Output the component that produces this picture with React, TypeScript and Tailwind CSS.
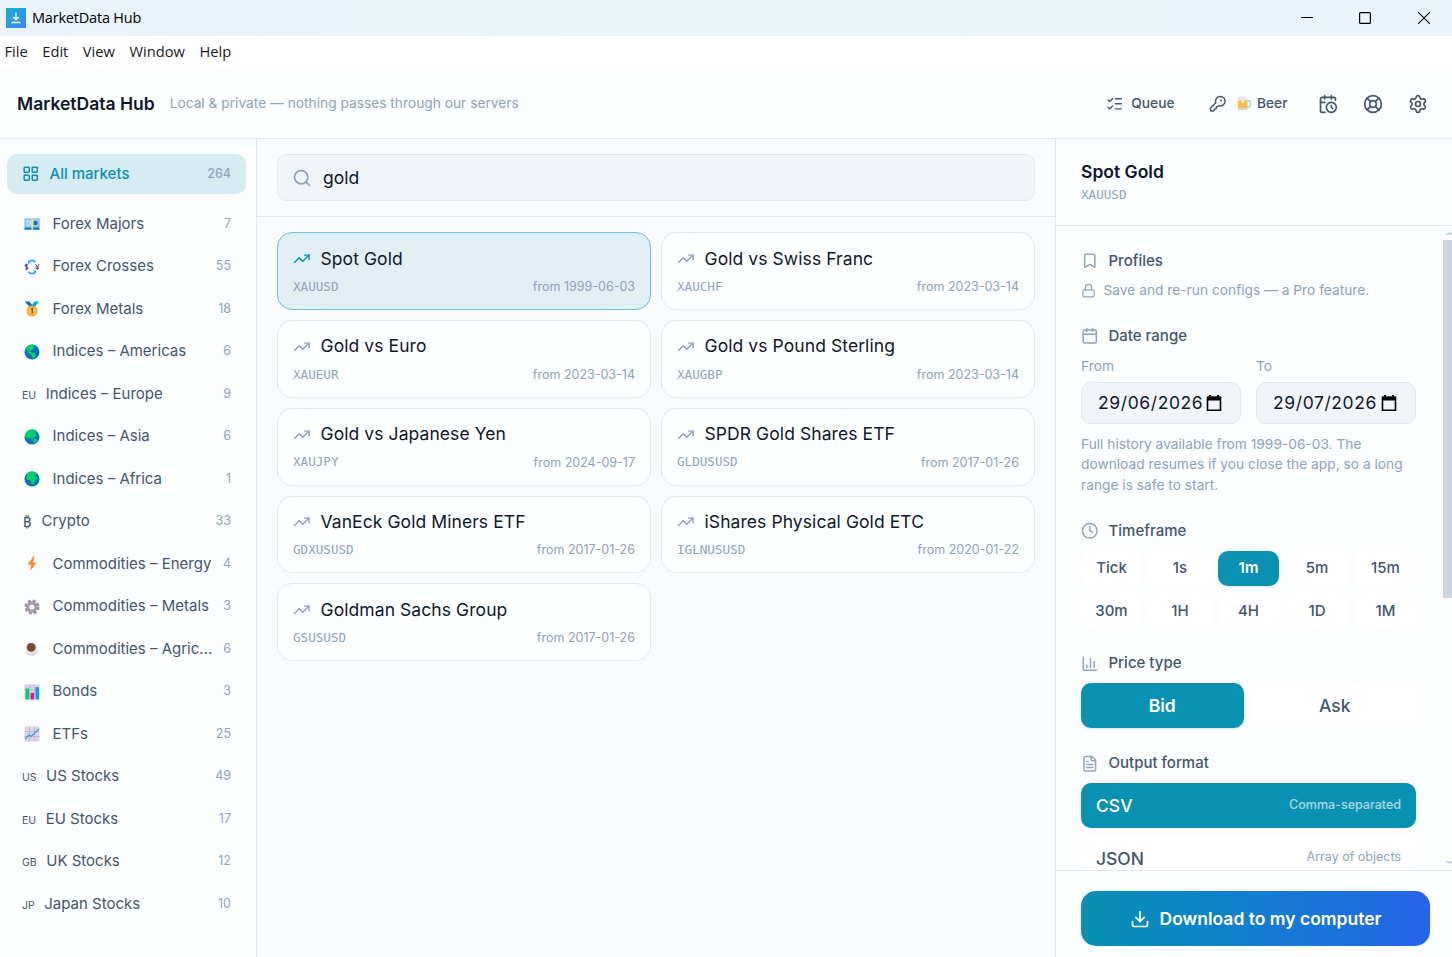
import type { ReactNode } from 'react';
import {
  Bookmark,
  Calendar,
  CalendarClock,
  ChartColumn,
  Clock,
  Download,
  FileText,
  KeyRound,
  LayoutGrid,
  LifeBuoy,
  ListChecks,
  Lock,
  Search,
  Settings,
  TrendingUp,
} from 'lucide-react';

interface Market {
  icon: ReactNode;
  name: string;
  count: number;
  emoji?: boolean;
}

interface Instrument {
  name: string;
  symbol: string;
  from: string;
}

const Emoji = ({ children }: { children: ReactNode }) => (
  <svg viewBox="0 0 16 16" className="h-4 w-4 shrink-0">
    {children}
  </svg>
);

const Banknote = () => (
  <Emoji>
    <path d="M0.5 2.5h15v9h-15z" fill="#5ab4f2" />
    <path d="M1.5 3.5h13v7h-13z" fill="#9fd3f8" />
    <path d="M0.5 11.5h15v2.2h-15z" fill="#0074c5" />
    <ellipse cx="4.8" cy="7" rx="2.2" ry="2.8" fill="#d5ecfc" />
    <path d="M6 5.4C4 4.6 3.6 9.4 6 8.7M3.3 7h2" stroke="#5ab4f2" strokeWidth=".8" fill="none" />
    <circle cx="11.5" cy="7" r="2.2" fill="#1470ad" />
    <path d="M7.4 2.5h1.8v11.2H7.4z" fill="#fce36b" />
  </Emoji>
);

const Exchange = () => (
  <Emoji>
    <path d="M4.5 3.2C6.3.7 9.8.7 11.5 3.2" stroke="#26a8ef" strokeWidth="1.7" fill="none" />
    <path d="M4.5 12.8c1.8 2.5 5.3 2.5 7 0" stroke="#26a8ef" strokeWidth="1.7" fill="none" />
    <path d="M4 1.4v3.2h3zM12 14.6v-3.2H9z" fill="#26a8ef" />
    <path d="M4.1 6.2C3.2 5.2 1 5.4 1.1 6.7c.1 1.4 3 .8 3 2.3 0 1.3-2.2 1.5-3.1.5M2.6 4.6v6.6" stroke="#6a4d96" strokeWidth="1.1" fill="none" />
    <path d="M11.5 5l1.8 3 1.8-3M13.3 8v3M11.6 8h3.4M11.6 9.6h3.4" stroke="#6a4d96" strokeWidth="1" fill="none" />
  </Emoji>
);

const Medal = () => (
  <Emoji>
    <path d="M1 .6h4.4L9 5 5.8 6.6z" fill="#0074ba" />
    <path d="M15 .6h-4.4L7.2 5l3.3 1.6z" fill="#00a6ed" />
    <circle cx="8" cy="10" r="5.5" fill="#f9a92a" />
    <circle cx="8" cy="10" r="4.2" fill="#ffb838" />
    <path d="M7 8.3l1.3-.9v5.2" stroke="#6d4534" strokeWidth="1.2" fill="none" />
  </Emoji>
);

const Globe = ({ land }: { land: string }) => (
  <Emoji>
    <circle cx="8" cy="8" r="7.5" fill="#0074ba" />
    <path d={land} fill="#00d26a" />
  </Emoji>
);

const Bolt = () => (
  <Emoji>
    <path d="M9.2.8L3.6 8.8h3.6L6.2 15l6.4-8.6H9L10.6.8z" fill="#ff822d" />
  </Emoji>
);

const Gear = () => (
  <Emoji>
    <circle cx="8" cy="8" r="6.2" stroke="#998ea4" strokeWidth="2.6" strokeDasharray="2.9 1.97" fill="none" />
    <circle cx="8" cy="8" r="4.2" stroke="#998ea4" strokeWidth="3.2" fill="none" />
    <circle cx="8" cy="8" r="4.4" stroke="#b4acbc" strokeWidth="1.1" fill="none" />
  </Emoji>
);

const Coffee = () => (
  <Emoji>
    <ellipse cx="7.7" cy="9.6" rx="5.9" ry="5.1" fill="#d3d3d3" />
    <circle cx="7.2" cy="7.5" r="6" fill="#e6e6e6" />
    <circle cx="7.2" cy="6.4" r="4.4" fill="#7d4533" />
  </Emoji>
);

const Bars = () => (
  <Emoji>
    <rect x=".5" y=".5" width="15" height="15" rx="1" fill="#d9d0e3" />
    <path d="M5.5.5v15M10.5.5v15M.5 5.5h15M.5 10.5h15" stroke="#b9aeca" strokeWidth=".7" />
    <path d="M1.5 4.5H5v11H1.5z" fill="#00d26a" />
    <path d="M6.5 9H10v6.5H6.5z" fill="#f70a8d" />
    <path d="M11.5 3H15v12.5h-3.5z" fill="#00a6ed" />
  </Emoji>
);

const LineChart = () => (
  <Emoji>
    <rect x=".5" y=".5" width="15" height="15" rx="1" fill="#dcd3e8" />
    <path d="M5.5.5v15M10.5.5v15M.5 5.5h15M.5 10.5h15" stroke="#b9aeca" strokeWidth=".8" />
    <path d="M1 13l4-4 2 1.5L15 3" stroke="#2f9be6" strokeWidth="1.1" fill="none" />
  </Emoji>
);

const Beer = () => (
  <Emoji>
    <path d="M11 5.5h1.8a1.4 1.4 0 0 1 1.4 1.4v3.6a1.4 1.4 0 0 1-1.4 1.4H11" stroke="#8fd0fb" strokeWidth="1.5" fill="none" />
    <path d="M2 4h9.5v9.2a1.5 1.5 0 0 1-1.5 1.5H3.5A1.5 1.5 0 0 1 2 13.2z" fill="#fbbf3f" />
    <path d="M1.5 13.2h10.3l-.5 1.8H2z" fill="#c5dcd8" />
    <path d="M1.8 5.5a2 2 0 0 1 1-3.5c1-1.3 2.6-1.2 3.5-.4 1.5-.9 3.5-.2 3.8 1.1 1.500.2 2 1.7 1.4 2.8H8v2.300H5.700V5.500z" fill="#ebe7ef" />
  </Emoji>
);

const AMERICAS = 'M3.5 2.2C5.5.6 8.5.3 10.5 1l-1 1.5 1 1-2.2 1.8L7 7 4.8 6.2l.5 1.5L7.5 8.3l3 .8 1.8 1.7-1.8 3-1.5 1.5-1.2-3.5-1.5-2L3.8 8 2 4.8z';
const ASIA = 'M2.2 3.3C5 .2 9.8-.2 12.5 2l-1 2 1 2.2-2 2.3-1.2-.5L8 11 6.5 8.8 4 9.5 1 8c0-2 .3-3.5 1.2-4.7zM9.5 10.5l3-.8 1.3 1.6-2.6 2.9-2-1.2z';
const AFRICA = 'M3 2.5C5.5.2 10-.1 12.8 2.2L12 4l-2-.3.5 1.3 2.2.6 1.6 2-2 .6L11 10.5 8.8 13.8l-1.3-.6L7 9.5 3.5 9 2 7l.8-2z';

const Tag = ({ children }: { children: string }) => (
  <span className="inline-block text-[10.5px]">{children}</span>
);

const markets: Market[] = [
  { icon: <Banknote />, name: 'Forex Majors', count: 7, emoji: true },
  { icon: <Exchange />, name: 'Forex Crosses', count: 55, emoji: true },
  { icon: <Medal />, name: 'Forex Metals', count: 18, emoji: true },
  { icon: <Globe land={AMERICAS} />, name: 'Indices – Americas', count: 6, emoji: true },
  { icon: <Tag>EU</Tag>, name: 'Indices – Europe', count: 9 },
  { icon: <Globe land={ASIA} />, name: 'Indices – Asia', count: 6, emoji: true },
  { icon: <Globe land={AFRICA} />, name: 'Indices – Africa', count: 1, emoji: true },
  { icon: <span className="inline-block w-[10px] font-['Noto_Sans'] text-[15px]">₿</span>, name: 'Crypto', count: 33 },
  { icon: <Bolt />, name: 'Commodities – Energy', count: 4, emoji: true },
  { icon: <Gear />, name: 'Commodities – Metals', count: 3, emoji: true },
  { icon: <Coffee />, name: 'Commodities – Agric...', count: 6, emoji: true },
  { icon: <Bars />, name: 'Bonds', count: 3, emoji: true },
  { icon: <LineChart />, name: 'ETFs', count: 25, emoji: true },
  { icon: <Tag>US</Tag>, name: 'US Stocks', count: 49 },
  { icon: <Tag>EU</Tag>, name: 'EU Stocks', count: 17 },
  { icon: <Tag>GB</Tag>, name: 'UK Stocks', count: 12 },
  { icon: <Tag>JP</Tag>, name: 'Japan Stocks', count: 10 },
];

const instruments: Instrument[] = [
  { name: 'Spot Gold', symbol: 'XAUUSD', from: '1999-06-03' },
  { name: 'Gold vs Swiss Franc', symbol: 'XAUCHF', from: '2023-03-14' },
  { name: 'Gold vs Euro', symbol: 'XAUEUR', from: '2023-03-14' },
  { name: 'Gold vs Pound Sterling', symbol: 'XAUGBP', from: '2023-03-14' },
  { name: 'Gold vs Japanese Yen', symbol: 'XAUJPY', from: '2024-09-17' },
  { name: 'SPDR Gold Shares ETF', symbol: 'GLDUSUSD', from: '2017-01-26' },
  { name: 'VanEck Gold Miners ETF', symbol: 'GDXUSUSD', from: '2017-01-26' },
  { name: 'iShares Physical Gold ETC', symbol: 'IGLNUSUSD', from: '2020-01-22' },
  { name: 'Goldman Sachs Group', symbol: 'GSUSUSD', from: '2017-01-26' },
];

const timeframes = ['Tick', '1s', '1m', '5m', '15m', '30m', '1H', '4H', '1D', '1M'];

const TitleBar = () => (
  <div className="flex h-9 shrink-0 items-center bg-linear-to-r from-[#eaf2fb] via-[#e9f5f7] to-[#ebf3fb] pl-1.5 font-['Open_Sans'] text-black">
    <div className="flex h-5 w-5 items-center justify-center bg-linear-to-br from-[#0fb3d6] to-[#3583f5]">
      <svg viewBox="0 0 20 20" className="h-5 w-5" fill="none" stroke="white" strokeWidth="1.3">
        <path d="M10 4.5v7M7.2 9l2.8 2.8L12.8 9M5.5 14.5h9" />
      </svg>
    </div>
    <span className="ml-1.5 text-[14.5px] tracking-[-0.2px]">MarketData Hub</span>
    <div className="ml-auto flex items-center">
      <svg viewBox="0 0 12 12" className="mr-[46px] h-3 w-3" stroke="black" fill="none">
        <path d="M0 5.5h12" />
      </svg>
      <svg viewBox="0 0 12 12" className="mr-[47px] h-3 w-3" stroke="black" strokeWidth="1.2" fill="none">
        <rect x=".6" y=".6" width="10.8" height="10.8" rx="1" />
      </svg>
      <svg viewBox="0 0 12 12" className="mr-[22px] h-3 w-3" stroke="black" strokeWidth="1.1" fill="none">
        <path d="M0 0l12 12M12 0L0 12" />
      </svg>
    </div>
  </div>
);

const MenuBar = () => (
  <div className="flex h-[33px] shrink-0 items-center gap-[14.5px] bg-white pb-0.5 pl-[4.5px] font-['Open_Sans'] text-[14.7px] text-[#1a1a1a]">
    <span>File</span>
    <span>Edit</span>
    <span>View</span>
    <span>Window</span>
    <span>Help</span>
  </div>
);

const Header = () => (
  <header className="flex h-[70px] shrink-0 items-center border-b border-slate-200 bg-[#fcfdff] pr-6 pl-[17px]">
    <h1 className="pt-0.5 text-[17.5px] font-semibold text-slate-900">MarketData Hub</h1>
    <span className="ml-[15px] pb-px text-[13.75px] text-slate-400">
      Local &amp; private — nothing passes through our servers
    </span>
    <div className="ml-auto flex items-center text-slate-600">
      <ListChecks size={17.5} />
      <span className="ml-[7.5px] pb-px text-[13.75px] font-medium">Queue</span>
      <KeyRound size={17.5} className="ml-[34.5px]" />
      <span className="ml-[9.5px] flex items-center gap-[5px] pb-px text-[13.75px] font-medium">
        <Beer />
        Beer
      </span>
      <CalendarClock size={20} className="ml-[30.5px]" />
      <LifeBuoy size={20} className="ml-[25px]" />
      <Settings size={20} className="ml-[25px]" />
    </div>
  </header>
);

const Sidebar = () => (
  <aside className="flex w-[257px] shrink-0 flex-col border-r border-slate-200 bg-[#fcfdff] pt-[15px] pr-[10px] pl-[7px]">
    <button className="flex h-10 items-center rounded-[10px] bg-[#d7ebf2] px-[15px] text-[15px] font-medium text-[#0891b2]">
      <LayoutGrid size={17.5} />
      <span className="ml-[10px]">All markets</span>
      <span className="ml-auto text-[12.5px] text-slate-400">264</span>
    </button>
    <div className="mt-[10px] flex flex-col gap-[2.5px]">
      {markets.map((market) => (
        <button key={market.name} className="flex h-10 items-center px-[15px] text-[15px] text-slate-600">
          <span className={market.emoji ? 'mr-[12.5px] ml-0.5 shrink-0' : 'mr-[9.5px] shrink-0'}>{market.icon}</span>
          <span className="whitespace-nowrap">{market.name}</span>
          <span className="ml-auto pl-[10px] text-[12.5px] text-slate-400">{market.count}</span>
        </button>
      ))}
    </div>
  </aside>
);

const InstrumentCard = ({ item, active }: { item: Instrument; active: boolean }) => (
  <div
    className={`h-[77.8px] rounded-[15px] border px-[15px] pt-[12.6px] ${
      active ? 'border-[#6fc0d3] bg-[#e0eff4]' : 'border-slate-200 bg-[#fdfeff]'
    }`}
  >
    <div className="flex h-[26px] items-center gap-[10px]">
      <TrendingUp size={17.5} className={active ? 'text-[#0891b2]' : 'text-slate-400'} />
      <span className="text-[17.5px] tracking-[0.08px] text-slate-900">{item.name}</span>
    </div>
    <div className="mt-[6px] flex h-[19px] items-center justify-between text-[12.5px] text-slate-400">
      <span className="font-['DejaVu_Sans_Mono'] text-[12.6px]">{item.symbol}</span>
      <span>from {item.from}</span>
    </div>
  </div>
);

const SectionTitle = ({ icon, children }: { icon: ReactNode; children: ReactNode }) => (
  <div className="mb-[10px] flex h-5 items-center gap-[10px] text-[15px] font-medium text-slate-600">
    <span className="text-slate-400">{icon}</span>
    {children}
  </div>
);

const DateField = ({ label, value }: { label: string; value: string }) => (
  <div>
    <div className="mb-[6px] h-5 text-[13.75px] leading-5 text-slate-400">{label}</div>
    <div className="flex h-[42px] items-center rounded-[10px] border border-slate-200 bg-[#f1f4f9] pl-4 text-[17.5px] text-slate-900">
      <span className="w-[108px] whitespace-nowrap tracking-[0.6px]">{value}</span>
      <svg viewBox="0 0 16 18" className="h-[18px] w-4 text-black">
        <path d="M1.5 3.5h13v12.8h-13z" stroke="currentColor" strokeWidth="1.6" fill="none" />
        <path d="M1 2.5h14v4H1zM3 1h2v2H3zM11 1h2v2h-2z" fill="currentColor" />
      </svg>
    </div>
  </div>
);

const ConfigPanel = () => (
  <aside className="flex w-[397px] shrink-0 flex-col border-l border-slate-200 bg-[#fcfdff]">
    <div className="h-[87px] shrink-0 border-b border-slate-200 px-[25px] pt-5">
      <h2 className="text-[17.5px] leading-[26px] font-semibold text-slate-900">Spot Gold</h2>
      <div className="font-['DejaVu_Sans_Mono'] text-[12.6px] leading-5 text-slate-400">XAUUSD</div>
    </div>

    <div className="flex min-h-0 flex-1 overflow-hidden">
      <div className="flex flex-1 flex-col gap-[25px] pt-[25px] pr-[27px] pl-[25px]">
        <section>
          <SectionTitle icon={<Bookmark size={17.5} />}>Profiles</SectionTitle>
          <div className="flex h-5 items-center gap-[7.5px] text-[13.75px] text-slate-400">
            <Lock size={15} className="mb-0.5" />
            <span className="pb-px">Save and re-run configs — a Pro feature.</span>
          </div>
        </section>

        <section>
          <SectionTitle icon={<Calendar size={17.5} />}>Date range</SectionTitle>
          <div className="grid grid-cols-2 gap-[15px]">
            <DateField label="From" value="29/06/2026" />
            <DateField label="To" value="29/07/2026" />
          </div>
          <p className="mt-[9.6px] mb-[0.4px] text-[13.75px] leading-[20.625px] text-slate-400">
            Full history available from 1999-06-03. The download resumes if you close the app, so a long range is safe
            to start.
          </p>
        </section>

        <section>
          <SectionTitle icon={<Clock size={17.5} />}>Timeframe</SectionTitle>
          <div className="grid grid-cols-5 gap-[7.5px]">
            {timeframes.map((tf) => (
              <button
                key={tf}
                className={`h-[35px] rounded-[10px] text-[15px] ${
                  tf === '1m' ? 'bg-[#0891b2] font-semibold text-white shadow-sm' : 'bg-white font-medium text-slate-600'
                }`}
              >
                {tf}
              </button>
            ))}
          </div>
        </section>

        <section>
          <SectionTitle icon={<ChartColumn size={17.5} />}>Price type</SectionTitle>
          <div className="grid grid-cols-2 gap-[10px] text-[17.5px]">
            <button className="h-[45px] rounded-[10px] bg-[#0891b2] font-semibold text-white shadow-sm">Bid</button>
            <button className="h-[45px] rounded-[10px] bg-white font-medium text-slate-600">Ask</button>
          </div>
        </section>

        <section>
          <SectionTitle icon={<FileText size={17.5} />}>Output format</SectionTitle>
          <div className="flex flex-col gap-2 text-[17.5px] font-medium">
            <button className="flex h-[45px] items-center justify-between rounded-[10px] bg-[#0891b2] px-[15px] text-white">
              CSV
              <span className="text-[12.5px] text-white/65">Comma-separated</span>
            </button>
            <button className="flex h-[45px] items-center justify-between rounded-[10px] bg-white px-[15px] text-slate-600">
              JSON
              <span className="pb-0.5 text-[12.5px] font-normal text-slate-400">Array of objects</span>
            </button>
          </div>
        </section>
      </div>

      {/* Scrollbar */}
      <div className="flex w-[9px] flex-col text-slate-300">
        <svg viewBox="0 0 9 14" className="h-[14px] w-[9px] shrink-0">
          <path d="M2 9h7V7L6 6z" fill="currentColor" />
        </svg>
        <div className="h-[358px] shrink-0 bg-slate-300" />
        <svg viewBox="0 0 9 14" className="mt-auto h-[14px] w-[9px] shrink-0">
          <path d="M2 5h7v2L6 8z" fill="currentColor" />
        </svg>
      </div>
    </div>

    <div className="h-[87px] shrink-0 border-t border-slate-200 pt-5 pr-[22px] pl-[25px]">
      <button className="flex h-[55px] w-full items-center justify-center gap-[10px] rounded-[15px] bg-linear-to-r from-[#0891b2] to-[#2563eb] text-[17.5px] font-semibold text-white">
        <Download size={20} />
        <span className="pt-px">Download to my computer</span>
      </button>
    </div>
  </aside>
);

export default function App() {
  return (
    <div className="flex h-screen flex-col overflow-hidden bg-[#f9fafc] font-[Inter,sans-serif]">
      <TitleBar />
      <MenuBar />
      <Header />
      <div className="flex min-h-0 flex-1">
        <Sidebar />
        <main className="flex min-w-0 flex-1 flex-col">
          <div className="h-[78px] shrink-0 border-b border-slate-200 px-5 pt-[15px]">
            <div className="flex h-[47px] items-center rounded-[10px] border border-slate-200 bg-[#f1f4f9] px-[14px]">
              <Search size={20} className="text-slate-400" />
              <input
                className="ml-[11px] flex-1 bg-transparent pt-0.5 text-[17.5px] text-slate-900 outline-none"
                defaultValue="gold"
              />
            </div>
          </div>
          <div className="grid grid-cols-2 gap-[10px] px-5 pt-[15.2px]">
            {instruments.map((item, i) => (
              <InstrumentCard key={item.symbol} item={item} active={i === 0} />
            ))}
          </div>
        </main>
        <ConfigPanel />
      </div>
    </div>
  );
}
